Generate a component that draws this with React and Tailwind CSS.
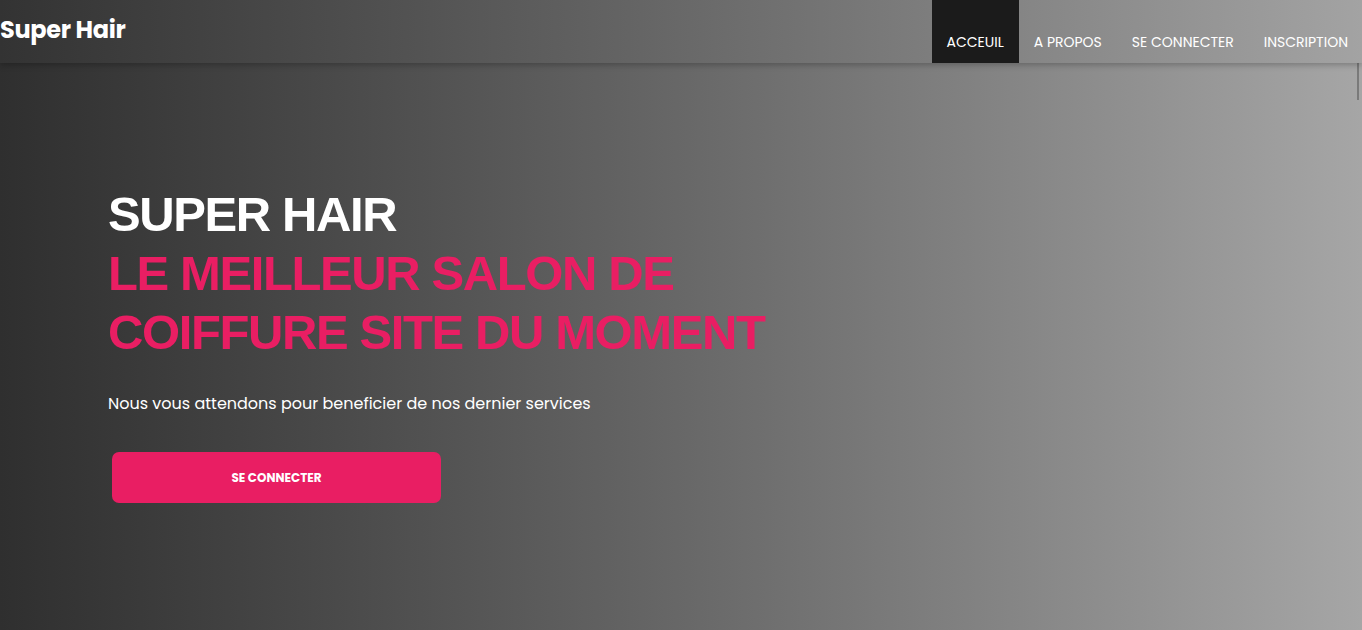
const navItems = ['ACCEUIL', 'A PROPOS', 'SE CONNECTER', 'INSCRIPTION'];

const App = () => {
  return (
    <div className="relative min-h-screen h-[630px] overflow-hidden bg-gradient-to-r from-[#2f2f2f] to-[#a6a6a6] font-['Poppins','Inter',sans-serif] text-white">
      <header className="relative z-10 flex h-[63px] items-stretch justify-between bg-gradient-to-r from-[#333333] to-[#a3a3a3] shadow-[0_2px_6px_rgba(0,0,0,0.25)]">
        <a href="#" className="pt-[13px] text-[24px] font-bold leading-[34px] tracking-[-0.3px]">
          Super Hair
        </a>
        <nav className="mr-[-1px] flex items-stretch">
          {navItems.map((item, i) => (
            <a
              key={item}
              href="#"
              className={`flex items-end px-[15px] pb-[11px] text-[14px] leading-[20px] ${
                i === 0 ? 'bg-[#1b1b1b]' : ''
              }`}
            >
              {item}
            </a>
          ))}
        </nav>
      </header>

      <main className="h-[567px] pl-[108px] pt-[122px]">
        <h1 className="font-['Liberation_Sans',Arial,sans-serif] text-[49px] font-bold leading-[59px] tracking-[-1.4px]">
          SUPER HAIR
          <br />
          <span className="text-[#e91e63]">
            LE MEILLEUR SALON DE
            <br />
            COIFFURE SITE DU MOMENT
          </span>
        </h1>
        <p className="mt-[30px] text-[16px] leading-[24px]">
          Nous vous attendons pour beneficier de nos dernier services
        </p>
        <button className="ml-[4px] mt-[36px] h-[51px] w-[329px] rounded-[7px] bg-[#e91e63] text-[12px] font-bold">
          SE CONNECTER
        </button>
      </main>

      <div className="absolute right-[3px] top-[8px] h-[92px] w-[2px] bg-[#7a7a7a]" />
    </div>
  );
};

export default App;
